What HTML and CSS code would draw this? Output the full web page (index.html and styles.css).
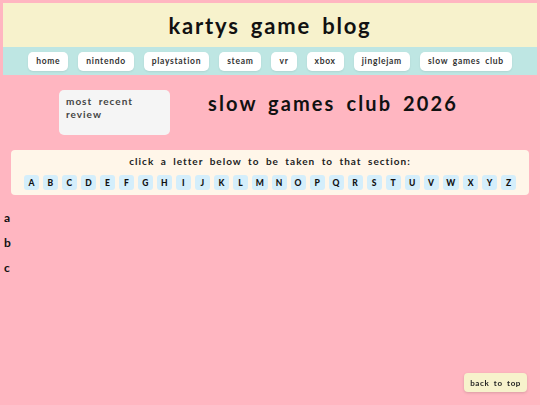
FILE: index.html
```html
<!DOCTYPE html>
<html lang="en">
<head>
<meta charset="utf-8">
<title>kartys game blog</title>
<link rel="stylesheet" href="styles.css">
</head>
<body>
<div class="page" id="top">
  <header class="site-header">
    <h1 class="site-title">kartys game blog</h1>
  </header>
  <nav class="site-nav">
    <a class="nav-btn" href="#">home</a>
    <a class="nav-btn" href="#">nintendo</a>
    <a class="nav-btn" href="#">playstation</a>
    <a class="nav-btn" href="#">steam</a>
    <a class="nav-btn" href="#">vr</a>
    <a class="nav-btn" href="#">xbox</a>
    <a class="nav-btn" href="#">jinglejam</a>
    <a class="nav-btn" href="#">slow games club</a>
  </nav>
  <div class="intro">
    <div class="review-card">most recent review</div>
    <h2 class="page-title">slow games club 2026</h2>
  </div>
  <div class="letters">
    <p class="letters-label">click a letter below to be taken to that section:</p>
    <div class="letter-row">
      <a class="letter" href="#a">A</a><a class="letter" href="#b">B</a><a class="letter" href="#c">C</a><a class="letter" href="#">D</a><a class="letter" href="#">E</a><a class="letter" href="#">F</a><a class="letter" href="#">G</a><a class="letter" href="#">H</a><a class="letter" href="#">I</a><a class="letter" href="#">J</a><a class="letter" href="#">K</a><a class="letter" href="#">L</a><a class="letter" href="#">M</a><a class="letter" href="#">N</a><a class="letter" href="#">O</a><a class="letter" href="#">P</a><a class="letter" href="#">Q</a><a class="letter" href="#">R</a><a class="letter" href="#">S</a><a class="letter" href="#">T</a><a class="letter" href="#">U</a><a class="letter" href="#">V</a><a class="letter" href="#">W</a><a class="letter" href="#">X</a><a class="letter" href="#">Y</a><a class="letter" href="#">Z</a>
    </div>
  </div>
  <section class="section" id="a">a</section>
  <section class="section" id="b">b</section>
  <section class="section" id="c">c</section>
</div>
<a class="back-top" href="#top">back to top</a>
</body>
</html>
```

FILE: styles.css
```css
* { box-sizing: border-box; }
html, body { margin: 0; padding: 0; }
body {
  background: #ffb6c1;
  font-family: "Lato", "Open Sans", sans-serif;
  font-weight: 700;
  color: #111;
  width: 540px;
  height: 405px;
  overflow: hidden;
}
a { text-decoration: none; color: inherit; }
.page { padding: 3px 3px 0 3px; }
.site-header {
  background: #f7f2cc;
  height: 44px;
  display: flex;
  align-items: center;
  justify-content: center;
}
.site-title {
  margin: 0;
  font-size: 22px;
  font-weight: 700;
  letter-spacing: 1.8px;
  word-spacing: 4px;
  color: #111;
}
.site-nav {
  background: #bee6e3;
  height: 28px;
  display: flex;
  align-items: center;
  justify-content: center;
  gap: 10px;
}
.nav-btn {
  flex-shrink: 0;
  white-space: nowrap;
  background: #fff;
  border-radius: 5px;
  height: 19px;
  padding: 0 8px;
  display: flex;
  align-items: center;
  font-size: 8.5px;
  letter-spacing: 0.7px;
  word-spacing: 2px;
  color: #333;
  box-shadow: 0 1px 2px rgba(0,0,0,0.08);
}
.intro {
  display: flex;
  align-items: flex-start;
  gap: 38px;
  padding: 15px 0 0 56px;
}
.review-card {
  background: #f5f5f5;
  border-radius: 5px;
  width: 111px;
  height: 45px;
  padding: 5px 7px;
  font-size: 10px;
  line-height: 13px;
  letter-spacing: 1px;
  word-spacing: 3px;
  color: #444;
}
.page-title {
  margin: 2px 0 0 0;
  font-size: 20px;
  font-weight: 700;
  letter-spacing: 2.1px;
  word-spacing: 4px;
  line-height: 22px;
  color: #111;
}
.letters {
  margin: 15px 8px 0 8px;
  background: #fff6e9;
  border-radius: 4px;
  height: 45px;
  padding-top: 5px;
}
.letters-label {
  margin: 0;
  text-align: center;
  font-size: 10px;
  line-height: 13px;
  letter-spacing: 1px;
  word-spacing: 3px;
  color: #222;
}
.letter-row {
  margin-top: 7px;
  display: flex;
  justify-content: center;
  gap: 4px;
}
.letter {
  background: #d4eefb;
  border-radius: 3px;
  height: 15px;
  min-width: 15px;
  padding: 0 3.8px;
  display: flex;
  align-items: center;
  justify-content: center;
  font-size: 8.5px;
  font-weight: 900;
  color: #111;
}
.section {
  padding-left: 1px;
  font-size: 12px;
  line-height: 25px;
  height: 25px;
  color: #111;
}
#a { margin-top: 10px; }
.back-top {
  position: fixed;
  right: 13px;
  bottom: 13px;
  background: #f7f2cc;
  border-radius: 4px;
  padding: 0 6px;
  height: 19px;
  display: flex;
  align-items: center;
  font-size: 8px;
  letter-spacing: 0.6px;
  word-spacing: 2px;
  color: #222;
  box-shadow: 0 1px 3px rgba(0,0,0,0.15);
}
```
